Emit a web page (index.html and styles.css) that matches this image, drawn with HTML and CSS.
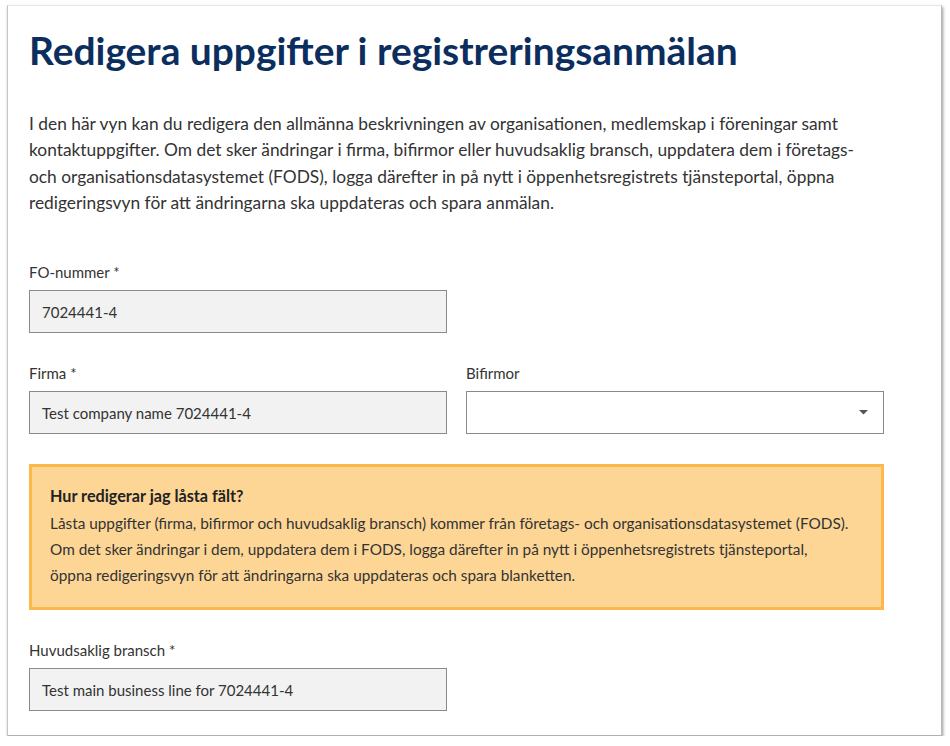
FILE: index.html
```html
<!DOCTYPE html>
<html lang="sv">
<head>
<meta charset="utf-8">
<link rel="stylesheet" href="styles.css">
</head>
<body>
<div class="card">
  <h1 class="title">Redigera uppgifter i registreringsanmälan</h1>
  <p class="intro">I den här vyn kan du redigera den allmänna beskrivningen av organisationen, medlemskap i föreningar samt<br>kontaktuppgifter. Om det sker ändringar i firma, bifirmor eller huvudsaklig bransch, uppdatera dem i företags-<br>och organisationsdatasystemet (FODS), logga därefter in på nytt i öppenhetsregistrets tjänsteportal, öppna<br>redigeringsvyn för att ändringarna ska uppdateras och spara anmälan.</p>

  <div class="row">
    <div class="field">
      <label class="label">FO-nummer *</label>
      <div class="input locked">7024441-4</div>
    </div>
  </div>

  <div class="row">
    <div class="field">
      <label class="label">Firma *</label>
      <div class="input locked">Test company name 7024441-4</div>
    </div>
    <div class="field">
      <label class="label">Bifirmor</label>
      <div class="input select">
        <svg class="caret" width="9" height="5" viewBox="0 0 9 5"><path d="M0 0 L9 0 L4.5 4.5 Z" fill="#555"/></svg>
      </div>
    </div>
  </div>

  <div class="notice">
    <div class="notice-title">Hur redigerar jag låsta fält?</div>
    <div class="notice-text">Låsta uppgifter (firma, bifirmor och huvudsaklig bransch) kommer från företags- och organisationsdatasystemet (FODS).<br>Om det sker ändringar i dem, uppdatera dem i FODS, logga därefter in på nytt i öppenhetsregistrets tjänsteportal,<br>öppna redigeringsvyn för att ändringarna ska uppdateras och spara blanketten.</div>
  </div>

  <div class="row last">
    <div class="field">
      <label class="label">Huvudsaklig bransch *</label>
      <div class="input locked">Test main business line for 7024441-4</div>
    </div>
  </div>
</div>
</body>
</html>
```

FILE: styles.css
```css
html, body {
  margin: 0;
  padding: 0;
  background: #ffffff;
}
body {
  font-family: Lato, "Open Sans", sans-serif;
  color: #333333;
  padding: 5px 8px 0 7px;
}
.card {
  width: 935px;
  height: 731px;
  box-sizing: border-box;
  background: #ffffff;
  border-top: 1px solid #e6e6e6;
  border-left: 1px solid #c4c4c4;
  border-right: 1px solid #b8b8b8;
  border-bottom: 1px solid #b0b0b0;
  box-shadow: 1px 2px 3px rgba(0,0,0,0.4);
  padding: 21px 21px 0 21px;
}
.title {
  margin: 0;
  font-size: 38.9px;
  font-weight: 700;
  line-height: 46px;
  color: #0b2e5e;
}
.intro {
  margin: 38px 0 0 0;
  font-size: 17.35px;
  line-height: 26.3px;
  color: #333333;
  white-space: nowrap;
}
.row {
  display: grid;
  grid-template-columns: 418px 418px;
  column-gap: 19px;
  margin-top: 46px;
}
.row + .row {
  margin-top: 30px;
}
.field {
  display: flex;
  flex-direction: column;
}
.label {
  font-size: 15px;
  line-height: 20px;
  color: #333333;
  margin-bottom: 8px;
}
.input {
  height: 43px;
  box-sizing: border-box;
  border: 1px solid #8a8a8a;
  display: flex;
  align-items: center;
  padding: 0 12px;
  font-size: 15px;
  color: #333333;
}
.locked {
  background: #f2f2f2;
}
.select {
  background: #ffffff;
  justify-content: flex-end;
  padding-right: 15px;
}
.caret {
  display: block;
}
.notice {
  margin-top: 30px;
  width: 855px;
  box-sizing: border-box;
  background: #fdd696;
  border: 3px solid #fdb84a;
  padding: 19px 18px 19px 18px;
}
.notice-title {
  font-size: 16.2px;
  font-weight: 700;
  line-height: 20px;
  color: #222222;
  margin-bottom: 4px;
}
.notice-text {
  font-size: 15.35px;
  line-height: 26px;
  color: #333333;
  white-space: nowrap;
}
.row.last {
  margin-top: 30px;
}
```
